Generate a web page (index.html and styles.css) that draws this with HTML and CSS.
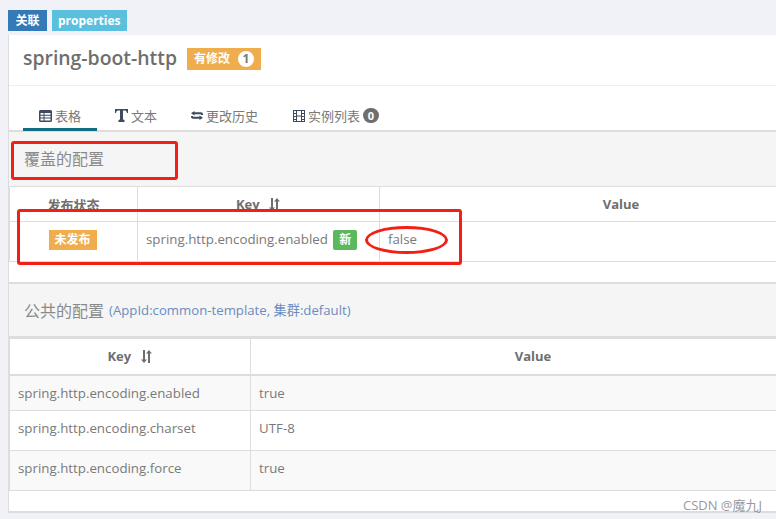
FILE: index.html
```html
<!DOCTYPE html>
<html lang="en">
<head>
    <meta charset="UTF-8">
    <meta name="viewport" content="width=device-width, initial-scale=1.0">
    <title>spring-boot-http</title>
    <link rel="stylesheet" href="styles.css">
</head>
<body>
    <div class="labels">
        <span class="tag tag-blue">关联</span>
        <span class="tag tag-cyan">properties</span>
    </div>

    <div class="panel">
        <div class="panel-head">
            <span class="title">spring-boot-http</span>
            <span class="modified">有修改 <span class="badge-white">1</span></span>
        </div>

        <div class="tabs">
            <div class="tab tab-table active">
                <svg class="icon" width="13" height="12" viewBox="0 0 13 12"><path fill="#3d4b5c" fill-rule="evenodd" d="M1.5 0h10A1.5 1.5 0 0 1 13 1.5v9a1.5 1.5 0 0 1-1.5 1.5h-10A1.5 1.5 0 0 1 0 10.500v-9A1.500 1.500 0 0 1 1.500 0zM1.500 3v1.800h3V3zm4 0v1.800h6V3zm-4 2.800v1.800h3V5.800zm4 0v1.800h6V5.800zm-4 2.800v1.900h3V8.600zm4 0v1.900h6V8.600z"/></svg>
                表格
            </div>
            <div class="tab tab-text">
                <svg class="icon" width="13" height="13" viewBox="0 0 13 13"><path fill="#3d4b5c" d="M0 0h13v4h-1c-.3-1.500-.8-2.500-2-2.500H8v9l1.500.5v2h-6v-2l1.500-.5v-9H3C1.800 1.500 1.300 2.500 1 4H0z"/></svg>
                文本
            </div>
            <div class="tab tab-history">
                <svg class="icon" width="12" height="9" viewBox="0 0 12 9"><path fill="#3d4b5c" d="M3.500 0v1.300H10a2 2 0 0 1 2 2V4h-2v-.2a.6.600 0 0 0-.6-.6H3.500v1.400L0 2.300zM8.500 9V7.700H2a2 2 0 0 1-2-2V5h2v.2c0 .3.300.6.600.6h5.900V4.400L12 6.700z"/></svg>
                更改历史
            </div>
            <div class="tab tab-list">
                <svg class="icon" width="12" height="12" viewBox="0 0 12 12"><path fill="#3d4b5c" fill-rule="evenodd" d="M0 0h12v12H0zM1 1v2h2V1zm0 3v2h2V4zm0 3v2h2V7zm0 3v1h2v-1zM9 1v2h2V1zM9 4v2h2V4zM9 7v2h2V7zm0 3v1h2v-1zM4 1v4.500h4V1zm0 5.500V11h4V6.500z"/></svg>
                实例列表
                <span class="badge-grey">0</span>
            </div>
        </div>

        <div class="section-head section-first">覆盖的配置</div>
        <table class="grid grid-first">
            <colgroup>
                <col class="col-status">
                <col class="col-key">
                <col>
            </colgroup>
            <thead>
                <tr>
                    <th>发布状态</th>
                    <th>Key <svg class="sort" width="13" height="13" viewBox="0 0 13 13"><path fill="#6e6e6e" d="M3 0h2v9.500h2L4 13 1 9.500h2zM9 0l3 3.500h-2V13H8V3.500H6z"/></svg></th>
                    <th class="th-value">Value</th>
                </tr>
            </thead>
            <tbody>
                <tr class="row-first">
                    <td class="center"><span class="tag-draft">未发布</span></td>
                    <td>spring.http.encoding.enabled <span class="tag-new">新</span></td>
                    <td class="value-false">false</td>
                </tr>
            </tbody>
        </table>

        <div class="section-head section-second">公共的配置 <small class="section-note">(AppId:common-template, 集群:default)</small></div>
        <table class="grid grid-second">
            <colgroup>
                <col class="col-key2">
                <col>
            </colgroup>
            <thead>
                <tr>
                    <th>Key <svg class="sort" width="13" height="13" viewBox="0 0 13 13"><path fill="#6e6e6e" d="M3 0h2v9.500h2L4 13 1 9.500h2zM9 0l3 3.500h-2V13H8V3.500H6z"/></svg></th>
                    <th class="th-value">Value</th>
                </tr>
            </thead>
            <tbody>
                <tr class="row-a striped">
                    <td>spring.http.encoding.enabled</td>
                    <td>true</td>
                </tr>
                <tr class="row-b">
                    <td>spring.http.encoding.charset</td>
                    <td>UTF-8</td>
                </tr>
                <tr class="row-b striped">
                    <td>spring.http.encoding.force</td>
                    <td>true</td>
                </tr>
            </tbody>
        </table>
    </div>

    <!-- red annotations drawn on top of the screenshot -->
    <div class="mark mark-title"></div>
    <div class="mark mark-row"></div>
    <div class="mark-oval"></div>
    <div class="watermark">CSDN @魔九J</div>
</body>
</html>
```

FILE: styles.css
```css
html, body {
    height: 519px;
    overflow: hidden;
}

body {
    font-family: 'Open Sans', 'Noto Sans CJK SC', sans-serif;
    font-size: 13.3px;
    color: #797979;
    margin: 0;
    padding: 0 0 0 8px;
    background: #f0f2f8;
    position: relative;
}

.labels {
    display: flex;
    gap: 5px;
    padding-top: 10px;
    height: 25px;
}

.tag {
    height: 21px;
    line-height: 21px;
    padding: 0 6px;
    color: white;
    font-size: 12px;
    font-weight: bold;
}
.tag-blue {
    background: #337ab7;
    padding: 0 7.5px;
}
.tag-cyan {
    background: #5bc0de;
}

.panel {
    background: white;
    height: 476px;
    border-left: 1px solid #ddd;
    border-bottom: 2px solid #ddd;
    width: 767px;
}

.panel-head {
    height: 48px;
    padding-bottom: 2px;
    border-bottom: 1px solid #eee;
    display: flex;
    align-items: center;
    padding-left: 14px;
}
.title {
    font-size: 19.4px;
    font-weight: 600;
    color: #6e6e6e;
    margin-bottom: 3px;
}
.modified {
    margin-left: 10px;
    height: 22px;
    line-height: 22px;
    width: 74px;
    padding-left: 7px;
    box-sizing: border-box;
    background: #f0ad4e;
    color: white;
    font-size: 12px;
    font-weight: bold;
    display: flex;
    align-items: center;
    gap: 8px;
}
.badge-white {
    background: white;
    color: #797979;
    width: 16px;
    height: 16px;
    line-height: 16px;
    border-radius: 8px;
    text-align: center;
}

.tabs {
    display: flex;
    height: 44px;
    padding-left: 14px;
    border-bottom: 2px solid #ddd;
    align-items: flex-end;
    font-size: 13px;
}
.tab {
    height: 28px;
    line-height: 24px;
    margin-bottom: -1px;
    display: flex;
    align-items: center;
    justify-content: flex-start;
    gap: 3px;
    white-space: nowrap;
    box-sizing: border-box;
    padding-bottom: 3px;
}
.tab-table {
    width: 74px;
    padding-left: 16px;
}
.tab-text {
    width: 76px;
    padding-left: 18px;
}
.tab-history {
    width: 102px;
    padding-left: 18px;
    margin-right: 18px;
}
.tab-list {
    padding-left: 0;
}
.active {
    border-bottom: 3px solid #126d82;
    border-radius: 2px 2px 0 0;
    padding-bottom: 0;
}
.badge-grey {
    background: #6e6e6e;
    color: white;
    width: 16px;
    height: 15px;
    line-height: 15px;
    border-radius: 8px;
    font-size: 11px;
    font-weight: bold;
    text-align: center;
}

.section-head {
    background: #f5f5f5;
    font-size: 16px;
    color: #8a8a8a;
    padding-left: 15px;
    display: flex;
    align-items: center;
    box-sizing: border-box;
}
.section-first {
    height: 54px;
    padding-bottom: 3px;
}
.section-second {
    height: 55px;
    margin-top: 20px;
    border-top: 2px solid #ddd;
    border-bottom: 1px solid #ddd;
    padding-bottom: 1px;
}
.section-note {
    font-size: 13.2px;
    color: #6c8cbd;
    margin-left: 5px;
}

.grid {
    width: 767px;
    border-collapse: collapse;
    table-layout: fixed;
}
.grid-second {
    border-top: 2px solid #ddd;
}
.grid th, .grid td {
    border: 1px solid #ddd;
    padding: 0 8px;
    text-align: left;
}
.grid th:last-child, .grid td:last-child {
    border-right: none;
}
.grid th {
    text-align: center;
    font-size: 13px;
    font-weight: bold;
    color: #6e6e6e;
}
/* the real table runs on past the window, so push Value to where its centre falls */
.grid-first .th-value {
    padding-left: 94px;
}
.grid-second .th-value {
    padding-left: 47px;
}
.grid-first th {
    height: 34px;
}
.grid-first td {
    height: 35px;
    padding-bottom: 4px;
}
.grid-first td.value-false {
    height: 33px;
    padding-bottom: 6px;
}
.grid-second th {
    height: 33px;
    padding-bottom: 2px;
    border-width: 1px 1px 2px;
}
.row-a td {
    height: 34px;
}
.row-b td {
    height: 33px;
    padding-bottom: 6px;
}
.striped td {
    background: #f9f9f9;
}
.col-status {
    width: 128px;
}
.col-key {
    width: 242px;
}
.col-key2 {
    width: 241px;
}
.grid td.center {
    text-align: center;
    padding-left: 7px;
    padding-right: 9px;
}
.sort {
    margin-left: 5px;
    vertical-align: -2px;
}
.tag-draft {
    display: inline-block;
    width: 48px;
    height: 20px;
    line-height: 20px;
    background: #f0ad4e;
    color: white;
    font-size: 12px;
    font-weight: bold;
    text-align: center;
}
.tag-new {
    display: inline-block;
    width: 24px;
    height: 20px;
    line-height: 20px;
    margin-left: 2px;
    background: #5cb85c;
    color: white;
    font-size: 12px;
    font-weight: bold;
    text-align: center;
    border-radius: 2px;
}

/* annotations */
.mark {
    position: absolute;
    border: 3px solid #f41f14;
    border-radius: 3px;
    box-sizing: border-box;
}
.mark-title {
    left: 11px;
    top: 141px;
    width: 167px;
    height: 39px;
}
.mark-row {
    left: 17px;
    top: 209px;
    width: 445px;
    height: 56px;
}
.mark-oval {
    position: absolute;
    left: 365px;
    top: 226px;
    width: 83px;
    height: 28px;
    border: 3px solid #f41f14;
    border-radius: 50%;
    box-sizing: border-box;
}
.watermark {
    position: absolute;
    right: 14px;
    top: 495px;
    font-size: 13px;
    color: #999;
}
```
